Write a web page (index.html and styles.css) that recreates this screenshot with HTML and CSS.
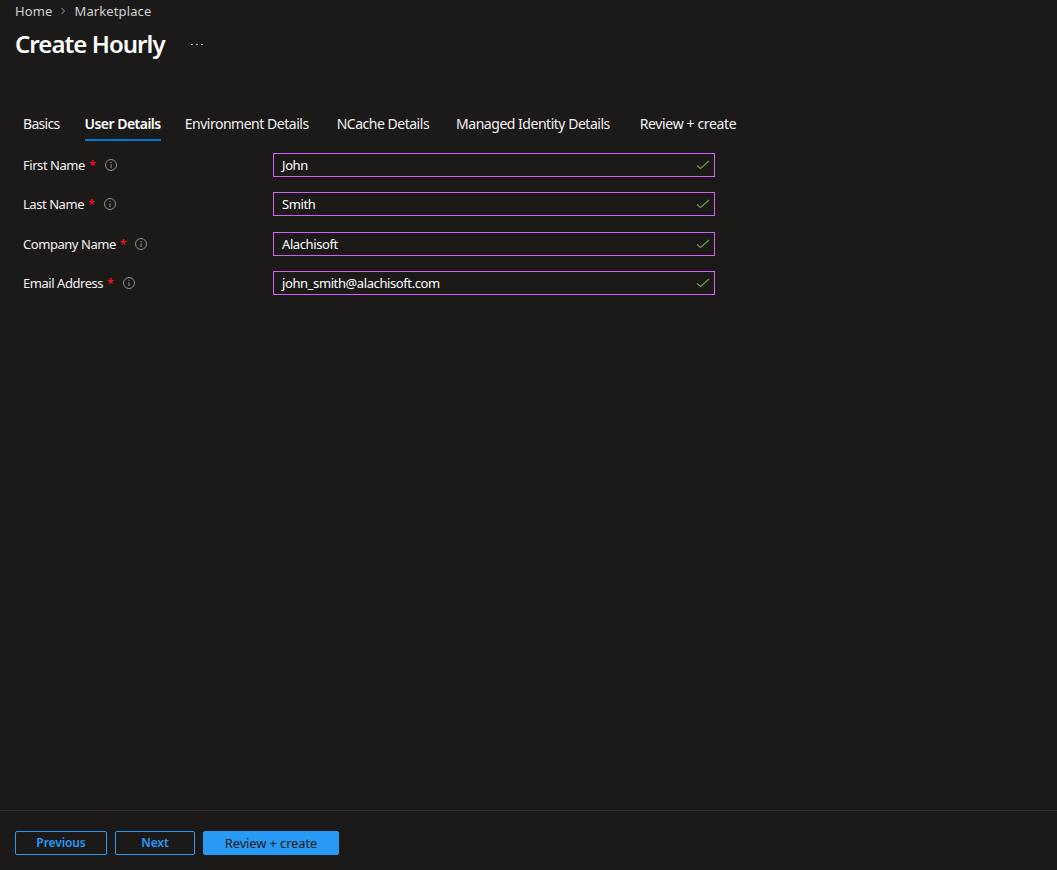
FILE: index.html
```html
<!DOCTYPE html>
<html lang="en">
<head>
<meta charset="utf-8">
<title>Create Hourly</title>
<link rel="stylesheet" href="styles.css">
</head>
<body>
<div class="page">
  <header class="head">
    <nav class="crumbs">
      <span>Home</span>
      <svg class="chev" viewBox="0 0 8 10" width="8" height="10"><path d="M2.5 2 L5.5 5 L2.5 8" fill="none" stroke="#9a9a9a" stroke-width="1"/></svg>
      <span>Marketplace</span>
    </nav>
    <div class="title-row">
      <h1>Create Hourly</h1>
      <span class="more"><i></i><i></i><i></i></span>
    </div>
  </header>
  <main class="main">
    <div class="tabs">
      <span class="tab tab-1">Basics</span>
      <span class="tab tab-2 active">User Details</span>
      <span class="tab tab-3">Environment Details</span>
      <span class="tab tab-4">NCache Details</span>
      <span class="tab tab-5">Managed Identity Details</span>
      <span class="tab tab-6">Review + create</span>
    </div>
    <form class="form">
      <div class="row">
        <div class="label"><span>First Name</span><b>*</b><svg class="info" viewBox="0 0 12 12" width="12" height="12"><circle cx="6" cy="6" r="5.5" fill="none" stroke="#8f8f8f"/><path d="M6 5.2V9M6 3v1.1" stroke="#8f8f8f" fill="none"/></svg></div>
        <div class="field"><span>John</span><svg class="check" viewBox="0 0 14 10" width="14" height="10"><path d="M1 5.5 L4.5 8.5 L13 1" fill="none" stroke="#6f9c3f" stroke-width="1.1"/></svg></div>
      </div>
      <div class="row">
        <div class="label"><span>Last Name</span><b>*</b><svg class="info" viewBox="0 0 12 12" width="12" height="12"><circle cx="6" cy="6" r="5.5" fill="none" stroke="#8f8f8f"/><path d="M6 5.2V9M6 3v1.1" stroke="#8f8f8f" fill="none"/></svg></div>
        <div class="field"><span>Smith</span><svg class="check" viewBox="0 0 14 10" width="14" height="10"><path d="M1 5.5 L4.5 8.5 L13 1" fill="none" stroke="#6f9c3f" stroke-width="1.1"/></svg></div>
      </div>
      <div class="row">
        <div class="label"><span>Company Name</span><b>*</b><svg class="info" viewBox="0 0 12 12" width="12" height="12"><circle cx="6" cy="6" r="5.5" fill="none" stroke="#8f8f8f"/><path d="M6 5.2V9M6 3v1.1" stroke="#8f8f8f" fill="none"/></svg></div>
        <div class="field"><span>Alachisoft</span><svg class="check" viewBox="0 0 14 10" width="14" height="10"><path d="M1 5.5 L4.5 8.5 L13 1" fill="none" stroke="#6f9c3f" stroke-width="1.1"/></svg></div>
      </div>
      <div class="row">
        <div class="label"><span>Email Address</span><b>*</b><svg class="info" viewBox="0 0 12 12" width="12" height="12"><circle cx="6" cy="6" r="5.5" fill="none" stroke="#8f8f8f"/><path d="M6 5.2V9M6 3v1.1" stroke="#8f8f8f" fill="none"/></svg></div>
        <div class="field"><span>john_smith@alachisoft.com</span><svg class="check" viewBox="0 0 14 10" width="14" height="10"><path d="M1 5.5 L4.5 8.5 L13 1" fill="none" stroke="#6f9c3f" stroke-width="1.1"/></svg></div>
      </div>
    </form>
  </main>
  <footer class="foot">
    <button type="button" class="btn btn-prev">Previous</button>
    <button type="button" class="btn btn-next">Next</button>
    <button type="button" class="btn btn-primary">Review + create</button>
  </footer>
</div>
</body>
</html>
```
FILE: styles.css
```css
* { box-sizing: border-box; }
html, body { margin: 0; height: 100%; }
body {
  background: #1b1a19;
  color: #fff;
  font-family: "Noto Sans", "Open Sans", "Liberation Sans", sans-serif;
  font-size: 13px;
  overflow: hidden;
}
.page { height: 870px; display: flex; flex-direction: column; }
.head { padding: 2px 15px 0; }
.crumbs { display: flex; align-items: center; gap: 6px; height: 18px; color: #d0d0d0; letter-spacing: 0.12px; }
.chev { margin: 0 1px; }
.title-row { display: flex; align-items: center; height: 34px; margin-top: 7px; }
h1 { margin: 0; font-size: 24px; font-weight: 600; line-height: 34px; letter-spacing: -0.95px; color: #fff; }
.more { display: flex; gap: 3px; margin-left: 26px; }
.more i { width: 2px; height: 1px; background: #b5b5b5; }
.main { flex: 1; padding: 0 23px; }
.tabs { display: flex; margin-top: 50px; height: 36px; }
.tab { height: 30px; line-height: 26px; font-size: 14px; letter-spacing: -0.48px; white-space: nowrap; color: #f3f2f1; }
.tab-1 { margin-right: 25px; letter-spacing: -0.7px; }
.tab-2 { margin-right: 24px; }
.tab-3 { margin-right: 28px; }
.tab-4 { margin-right: 27px; }
.tab-5 { margin-right: 30px; }
.tab-6 { letter-spacing: -0.36px; }
.active { font-weight: 600; color: #fff; border-bottom: 2px solid #0078d4; letter-spacing: -0.52px; }
.form { display: flex; flex-direction: column; row-gap: 15.33px; margin-top: 6px; }
.row { display: flex; align-items: center; height: 24px; }
.label { width: 250px; display: flex; align-items: center; letter-spacing: -0.45px; color: #f3f2f1; }
.label b { color: #e81123; font-weight: 600; margin-left: 4px; }
.info { margin-left: 9px; }
.field {
  width: 442px; height: 24px; border: 1px solid #d55ff0; padding: 0 4px 0 8px;
  display: flex; align-items: center; justify-content: space-between; letter-spacing: -0.4px;
}
.foot { height: 60px; border-top: 1px solid #323130; padding: 20px 15px 0; display: flex; align-items: flex-start; gap: 8px; }
.btn { height: 24px; border-radius: 2px; font: 600 12px "Noto Sans", sans-serif; letter-spacing: -0.1px; background: transparent; color: #2899f5; border: 1px solid #2899f5; padding: 0 0 1px; }
.btn-prev { width: 92px; }
.btn-next { width: 80px; }
.btn-primary { width: 136px; background: #2899f5; color: #1b1a19; font-weight: 400; font-size: 13px; letter-spacing: -0.15px; }
```
